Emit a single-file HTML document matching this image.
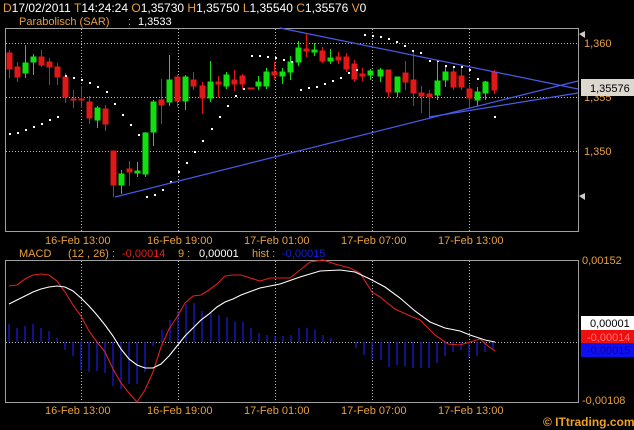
<!DOCTYPE html>
<html><head><meta charset="utf-8"><style>
html,body{margin:0;padding:0;background:#000;width:634px;height:430px;overflow:hidden}
svg{display:block}
text{font-family:"Liberation Sans",sans-serif}
</style></head><body>
<svg width="634" height="430" viewBox="0 0 634 430" xmlns="http://www.w3.org/2000/svg">
<rect width="634" height="430" fill="#000"/>
<!-- header -->
<text x="3" y="12" font-size="12" fill="#fff"><tspan fill="#e8a040">D</tspan>17/02/2011  <tspan fill="#e8a040">T</tspan>14:24:24  <tspan fill="#e8a040">O</tspan>1,35730  <tspan fill="#e8a040">H</tspan>1,35750  <tspan fill="#e8a040">L</tspan>1,35540  <tspan fill="#e8a040">C</tspan>1,35576  <tspan fill="#e8a040">V</tspan>0</text>
<text x="19" y="25" font-size="11" fill="#e8a040">Parabolisch (SAR)</text>
<text x="128" y="25" font-size="11" fill="#e8a040">:</text>
<text x="138" y="25" font-size="11" fill="#fff">1,3533</text>
<!-- price panel -->
<g stroke="#bbb" stroke-width="1" stroke-dasharray="1,2">
<line x1="6" y1="43.5" x2="579" y2="43.5"/><line x1="6" y1="97.5" x2="579" y2="97.5"/><line x1="6" y1="151.5" x2="579" y2="151.5"/>
<line x1="81.5" y1="29" x2="81.5" y2="231"/><line x1="178.5" y1="29" x2="178.5" y2="231"/><line x1="275.5" y1="29" x2="275.5" y2="231"/><line x1="372.5" y1="29" x2="372.5" y2="231"/><line x1="469.5" y1="29" x2="469.5" y2="231"/>
</g>
<rect x="5.5" y="28.5" width="573" height="203" fill="none" stroke="#a0a0a0"/>
<polygon points="579,34 585,31 585,38" fill="#ccc"/>
<polygon points="579,196 585,193 585,200" fill="#ccc"/>
<g font-size="11" fill="#e8a040">
<text x="584" y="47">1,360</text><text x="584" y="101">1,355</text><text x="584" y="155">1,350</text>
<text x="45" y="244">16-Feb 13:00</text><text x="147" y="244">16-Feb 19:00</text><text x="244" y="244">17-Feb 01:00</text><text x="341" y="244">17-Feb 07:00</text><text x="438" y="244">17-Feb 13:00</text>
</g>
<!-- candles -->
<g id="c" stroke-width="1">
<g stroke="#e01818" fill="#e01818">
<line x1="9.5" y1="50" x2="9.5" y2="78"/><rect x="7" y="53" width="5" height="16"/>
<line x1="17.5" y1="62" x2="17.5" y2="82"/><rect x="15" y="67" width="5" height="10"/>
<line x1="41.5" y1="50" x2="41.5" y2="67"/><rect x="39" y="57" width="5" height="8"/>
<line x1="49.5" y1="58" x2="49.5" y2="85"/><rect x="47" y="62" width="5" height="5"/>
<line x1="57.5" y1="63" x2="57.5" y2="85"/><rect x="55" y="67" width="5" height="10"/>
<line x1="65.5" y1="73" x2="65.5" y2="103"/><rect x="63" y="77" width="5" height="20"/>
<line x1="73.5" y1="90" x2="73.5" y2="108"/><rect x="71" y="99" width="5" height="1"/>
<line x1="81.5" y1="86" x2="81.5" y2="108"/><rect x="79" y="99" width="5" height="1"/>
<line x1="89.5" y1="96" x2="89.5" y2="124"/><rect x="87" y="102" width="5" height="16"/>
<line x1="105.5" y1="105" x2="105.5" y2="131"/><rect x="103" y="109" width="5" height="15"/>
<line x1="113.5" y1="151" x2="113.5" y2="197"/><rect x="111" y="151" width="5" height="34"/>
<line x1="129.5" y1="161" x2="129.5" y2="186"/><rect x="127" y="169" width="5" height="3"/>
<line x1="161.5" y1="79" x2="161.5" y2="124"/><rect x="159" y="100" width="5" height="5"/>
<line x1="177.5" y1="75" x2="177.5" y2="107"/><rect x="175" y="77" width="5" height="24"/>
<line x1="193.5" y1="72" x2="193.5" y2="90"/><rect x="191" y="80" width="5" height="6"/>
<line x1="202.5" y1="82" x2="202.5" y2="114"/><rect x="200" y="86" width="5" height="12"/>
<line x1="218.5" y1="76" x2="218.5" y2="97"/><rect x="216" y="82" width="5" height="2"/>
<line x1="234.5" y1="70" x2="234.5" y2="91"/><rect x="232" y="80" width="5" height="4"/>
<line x1="242.5" y1="74" x2="242.5" y2="89"/><rect x="240" y="76" width="5" height="8"/>
<rect x="248" y="88" width="6" height="1"/>
<line x1="274.5" y1="62" x2="274.5" y2="80"/><rect x="272" y="72" width="5" height="3"/>
<line x1="306.5" y1="34" x2="306.5" y2="57"/><rect x="304" y="49" width="5" height="2"/>
<line x1="322.5" y1="47" x2="322.5" y2="63"/><rect x="320" y="51" width="5" height="10"/>
<line x1="338.5" y1="52" x2="338.5" y2="64"/><rect x="336" y="57" width="5" height="3"/>
<line x1="346.5" y1="53" x2="346.5" y2="72"/><rect x="344" y="57" width="5" height="12"/>
<line x1="354.5" y1="60" x2="354.5" y2="82"/><rect x="352" y="64" width="5" height="15"/>
<line x1="362.5" y1="68" x2="362.5" y2="81"/><rect x="360" y="74" width="5" height="2"/>
<line x1="388.5" y1="70" x2="388.5" y2="97"/><rect x="386" y="70" width="5" height="22"/>
<line x1="405.5" y1="61" x2="405.5" y2="90"/><rect x="403" y="73" width="5" height="9"/>
<line x1="413.5" y1="51" x2="413.5" y2="106"/><rect x="411" y="80" width="5" height="13"/>
<line x1="421.5" y1="86" x2="421.5" y2="113"/><rect x="419" y="93" width="5" height="3"/>
<line x1="429.5" y1="90" x2="429.5" y2="117"/><rect x="427" y="94" width="5" height="3"/>
<line x1="453.5" y1="67" x2="453.5" y2="90"/><rect x="451" y="72" width="5" height="15"/>
<line x1="461.5" y1="67" x2="461.5" y2="90"/><rect x="459" y="76" width="5" height="11"/>
<line x1="469.5" y1="85" x2="469.5" y2="108"/><rect x="467" y="89" width="5" height="9"/>
<line x1="494.5" y1="70" x2="494.5" y2="94"/><rect x="492" y="72" width="5" height="18"/>
</g>
<g stroke="#10e010" fill="#10e010">
<line x1="25.5" y1="45" x2="25.5" y2="78"/><rect x="23" y="63" width="5" height="10"/>
<line x1="33.5" y1="54" x2="33.5" y2="75"/><rect x="31" y="57" width="5" height="5"/>
<line x1="97.5" y1="106" x2="97.5" y2="128"/><rect x="95" y="108" width="5" height="12"/>
<line x1="121.5" y1="170" x2="121.5" y2="194"/><rect x="119" y="174" width="5" height="11"/>
<line x1="137.5" y1="162" x2="137.5" y2="177"/><rect x="135" y="171" width="5" height="2"/>
<line x1="145.5" y1="132" x2="145.5" y2="177"/><rect x="143" y="133" width="5" height="41"/>
<line x1="153.5" y1="100" x2="153.5" y2="146"/><rect x="151" y="102" width="5" height="30"/>
<line x1="169.5" y1="55" x2="169.5" y2="106"/><rect x="167" y="80" width="5" height="22"/>
<line x1="185.5" y1="75" x2="185.5" y2="110"/><rect x="183" y="77" width="5" height="24"/>
<line x1="210.5" y1="61" x2="210.5" y2="102"/><rect x="208" y="82" width="5" height="16"/>
<line x1="226.5" y1="72" x2="226.5" y2="89"/><rect x="224" y="75" width="5" height="11"/>
<line x1="258.5" y1="76" x2="258.5" y2="90"/><rect x="256" y="82" width="5" height="4"/>
<line x1="266.5" y1="68" x2="266.5" y2="89"/><rect x="264" y="72" width="5" height="14"/>
<line x1="282.5" y1="68" x2="282.5" y2="84"/><rect x="280" y="72" width="5" height="4"/>
<line x1="290.5" y1="56" x2="290.5" y2="80"/><rect x="288" y="62" width="5" height="10"/>
<line x1="298.5" y1="41" x2="298.5" y2="66"/><rect x="296" y="48" width="5" height="14"/>
<line x1="314.5" y1="43" x2="314.5" y2="56"/><rect x="312" y="50" width="5" height="2"/>
<line x1="330.5" y1="49" x2="330.5" y2="64"/><rect x="328" y="58" width="5" height="3"/>
<line x1="370.5" y1="69" x2="370.5" y2="80"/><rect x="368" y="71" width="5" height="4"/>
<line x1="380.5" y1="68" x2="380.5" y2="82"/><rect x="378" y="70" width="5" height="6"/>
<line x1="397.5" y1="78" x2="397.5" y2="97"/><rect x="395" y="77" width="5" height="15"/>
<line x1="437.5" y1="61" x2="437.5" y2="100"/><rect x="435" y="81" width="5" height="14"/>
<line x1="445.5" y1="67" x2="445.5" y2="87"/><rect x="443" y="72" width="5" height="8"/>
<line x1="477.5" y1="87" x2="477.5" y2="106"/><rect x="475" y="92" width="5" height="8"/>
<line x1="485.5" y1="81" x2="485.5" y2="100"/><rect x="483" y="82" width="5" height="11"/>
</g>
</g>
<!-- SAR -->
<g fill="#fff">
<rect x="9" y="133" width="2" height="2"/><rect x="17" y="132" width="2" height="2"/><rect x="25" y="129" width="2" height="2"/><rect x="33" y="126" width="2" height="2"/><rect x="41" y="123" width="2" height="2"/><rect x="49" y="119" width="2" height="2"/><rect x="57" y="116" width="2" height="2"/>
<rect x="65" y="75" width="2" height="2"/><rect x="73" y="77" width="2" height="2"/><rect x="81" y="79" width="2" height="2"/><rect x="89" y="82" width="2" height="2"/><rect x="97" y="86" width="2" height="2"/><rect x="106" y="91" width="2" height="2"/><rect x="114" y="103" width="2" height="2"/><rect x="122" y="114" width="2" height="2"/><rect x="130" y="124" width="2" height="2"/><rect x="138" y="134" width="2" height="2"/>
<rect x="146" y="196" width="2" height="2"/><rect x="154" y="194" width="2" height="2"/><rect x="162" y="189" width="2" height="2"/><rect x="170" y="181" width="2" height="2"/><rect x="178" y="171" width="2" height="2"/><rect x="186" y="162" width="2" height="2"/><rect x="194" y="151" width="2" height="2"/><rect x="202" y="140" width="2" height="2"/><rect x="211" y="128" width="2" height="2"/><rect x="219" y="116" width="2" height="2"/><rect x="227" y="105" width="2" height="2"/><rect x="235" y="95" width="2" height="2"/><rect x="243" y="88" width="2" height="2"/>
<rect x="251" y="55" width="2" height="2"/><rect x="259" y="55" width="2" height="2"/><rect x="267" y="56" width="2" height="2"/><rect x="275" y="57" width="2" height="2"/><rect x="283" y="59" width="2" height="2"/><rect x="291" y="61" width="2" height="2"/>
<rect x="300" y="89" width="2" height="2"/><rect x="308" y="87" width="2" height="2"/><rect x="316" y="86" width="2" height="2"/><rect x="324" y="83" width="2" height="2"/><rect x="332" y="80" width="2" height="2"/><rect x="340" y="77" width="2" height="2"/><rect x="348" y="72" width="2" height="2"/><rect x="356" y="69" width="2" height="2"/>
<rect x="364" y="34" width="2" height="2"/><rect x="372" y="35" width="2" height="2"/><rect x="380" y="36" width="2" height="2"/><rect x="388" y="38" width="2" height="2"/><rect x="396" y="41" width="2" height="2"/><rect x="404" y="45" width="2" height="2"/><rect x="412" y="50" width="2" height="2"/><rect x="420" y="52" width="2" height="2"/><rect x="429" y="60" width="2" height="2"/><rect x="437" y="60" width="2" height="2"/><rect x="445" y="65" width="2" height="2"/><rect x="453" y="66" width="2" height="2"/><rect x="461" y="66" width="2" height="2"/><rect x="469" y="69" width="2" height="2"/><rect x="477" y="78" width="2" height="2"/><rect x="494" y="116" width="2" height="2"/>
</g>
<!-- trend lines -->
<g stroke="#4a5ae8" stroke-width="1.2" fill="none">
<line x1="280" y1="28" x2="578" y2="89"/>
<line x1="115" y1="197" x2="578" y2="81"/>
<line x1="429" y1="117" x2="578" y2="93"/>
</g>
<rect x="581" y="79" width="53" height="17" fill="#dcd8d0"/>
<text x="590" y="92" font-size="11" fill="#000">1,35576</text>
<!-- MACD header -->
<text x="19" y="257" font-size="11" fill="#e8a040">MACD</text>
<text x="68" y="257" font-size="11" fill="#e8a040">(12 , 26) :</text>
<text x="122" y="257" font-size="11" fill="#e02020">-0,00014</text>
<text x="178" y="257" font-size="11" fill="#e8a040">9 :</text>
<text x="199" y="257" font-size="11" fill="#fff">0,00001</text>
<text x="252" y="257" font-size="11" fill="#e8a040">hist :</text>
<text x="282" y="257" font-size="11" fill="#1020d0">-0,00015</text>
<!-- MACD panel -->
<g stroke="#bbb" stroke-width="1" stroke-dasharray="1,2">
<line x1="6" y1="342.5" x2="579" y2="342.5"/>
<line x1="81.5" y1="261" x2="81.5" y2="402"/><line x1="178.5" y1="261" x2="178.5" y2="402"/><line x1="275.5" y1="261" x2="275.5" y2="402"/><line x1="372.5" y1="261" x2="372.5" y2="402"/><line x1="469.5" y1="261" x2="469.5" y2="402"/>
</g>
<rect x="5.5" y="260.5" width="573" height="142" fill="none" stroke="#a0a0a0"/>
<g stroke="#1a1ad0" stroke-width="1.3">
<line x1="9" y1="342" x2="9" y2="324"/><line x1="17" y1="342" x2="17" y2="328"/><line x1="25" y1="342" x2="25" y2="326"/><line x1="33" y1="342" x2="33" y2="324"/><line x1="41" y1="342" x2="41" y2="328"/><line x1="49" y1="342" x2="49" y2="331"/><line x1="57" y1="342" x2="57" y2="338"/>
<line x1="65" y1="342" x2="65" y2="350"/><line x1="73" y1="342" x2="73" y2="356"/><line x1="81" y1="342" x2="81" y2="370"/><line x1="89" y1="342" x2="89" y2="372"/><line x1="97" y1="342" x2="97" y2="371"/><line x1="105" y1="342" x2="105" y2="373"/><line x1="113" y1="342" x2="113" y2="386"/><line x1="121" y1="342" x2="121" y2="389"/><line x1="129" y1="342" x2="129" y2="384"/><line x1="137" y1="342" x2="137" y2="384"/><line x1="145" y1="342" x2="145" y2="372"/><line x1="153" y1="342" x2="153" y2="346"/>
<line x1="162" y1="342" x2="162" y2="330"/><line x1="170" y1="342" x2="170" y2="320"/><line x1="178" y1="342" x2="178" y2="311"/><line x1="186" y1="342" x2="186" y2="304"/><line x1="194" y1="342" x2="194" y2="303"/><line x1="202" y1="342" x2="202" y2="311"/><line x1="211" y1="342" x2="211" y2="313"/><line x1="219" y1="342" x2="219" y2="315"/><line x1="227" y1="342" x2="227" y2="317"/><line x1="235" y1="342" x2="235" y2="322"/><line x1="243" y1="342" x2="243" y2="322"/><line x1="251" y1="342" x2="251" y2="328"/><line x1="259" y1="342" x2="259" y2="333"/><line x1="267" y1="342" x2="267" y2="335"/><line x1="275" y1="342" x2="275" y2="336"/><line x1="283" y1="342" x2="283" y2="336"/><line x1="291" y1="342" x2="291" y2="335"/><line x1="299" y1="342" x2="299" y2="328"/><line x1="307" y1="342" x2="307" y2="328"/><line x1="315" y1="342" x2="315" y2="330"/><line x1="323" y1="342" x2="323" y2="335"/><line x1="331" y1="342" x2="331" y2="338"/>
<line x1="356" y1="342" x2="356" y2="348"/><line x1="364" y1="342" x2="364" y2="355"/><line x1="372" y1="342" x2="372" y2="360"/><line x1="381" y1="342" x2="381" y2="360"/><line x1="389" y1="342" x2="389" y2="367"/><line x1="397" y1="342" x2="397" y2="365"/><line x1="405" y1="342" x2="405" y2="366"/><line x1="413" y1="342" x2="413" y2="368"/><line x1="421" y1="342" x2="421" y2="368"/><line x1="429" y1="342" x2="429" y2="368"/><line x1="437" y1="342" x2="437" y2="363"/><line x1="445" y1="342" x2="445" y2="356"/><line x1="453" y1="342" x2="453" y2="352"/><line x1="461" y1="342" x2="461" y2="350"/><line x1="469" y1="342" x2="469" y2="357"/><line x1="477" y1="342" x2="477" y2="356"/><line x1="485" y1="342" x2="485" y2="352"/><line x1="493" y1="342" x2="493" y2="349"/>
</g>
<polyline fill="none" stroke="#e02020" stroke-width="1.1" points="9,286 17,285 25,279 33,275 41,274 49,275 57,281 65,292 73,305 81,316 89,331 97,342 105,352 113,369 121,383 129,393 137,402 145,390 153,372 161,347 169,329 177,317 185,303 193,296 201,295 209,290 217,284 225,276 233,275 241,275 250,278 260,281 270,278 290,278 300,270 310,262 323,260 335,264 350,268 360,273 372,292 380,297 395,309 408,315 420,320 435,335 448,344 460,345 470,342 480,339 488,346 495,351"/>
<polyline fill="none" stroke="#fff" stroke-width="1.1" points="9,304 17,300 25,296 33,292 41,289 49,287 57,286 65,287 73,291 81,298 89,306 97,315 105,325 113,336 121,349 129,359 137,365 145,368 153,368 161,364 169,356 177,346 185,336 193,328 201,320 209,314 217,307 225,302 233,299 241,295 260,288 280,284 300,277 320,271 340,270 355,272 370,279 385,287 400,298 415,311 430,322 445,328 460,331 470,335 485,340 495,342"/>
<g font-size="11" fill="#e8a040">
<text x="582" y="264">0,00152</text><text x="582" y="404">-0,00108</text>
<text x="45" y="414">16-Feb 13:00</text><text x="147" y="414">16-Feb 19:00</text><text x="244" y="414">17-Feb 01:00</text><text x="341" y="414">17-Feb 07:00</text><text x="438" y="414">17-Feb 13:00</text>
</g>
<rect x="581" y="316" width="53" height="14" fill="#fff"/>
<text x="590" y="327" font-size="11" fill="#000">0,00001</text>
<rect x="581" y="330" width="53" height="13" fill="#ee1010"/>
<text x="587" y="341" font-size="11" fill="#ff7070">-0,00014</text>
<rect x="581" y="343" width="53" height="14" fill="#1010ee"/>
<text x="587" y="354" font-size="11" fill="#0808a0">-0,00015</text>
<text x="543" y="426" font-size="12" font-weight="bold" fill="#f0a020">© ITtrading.com</text>
</svg>
</body></html>
